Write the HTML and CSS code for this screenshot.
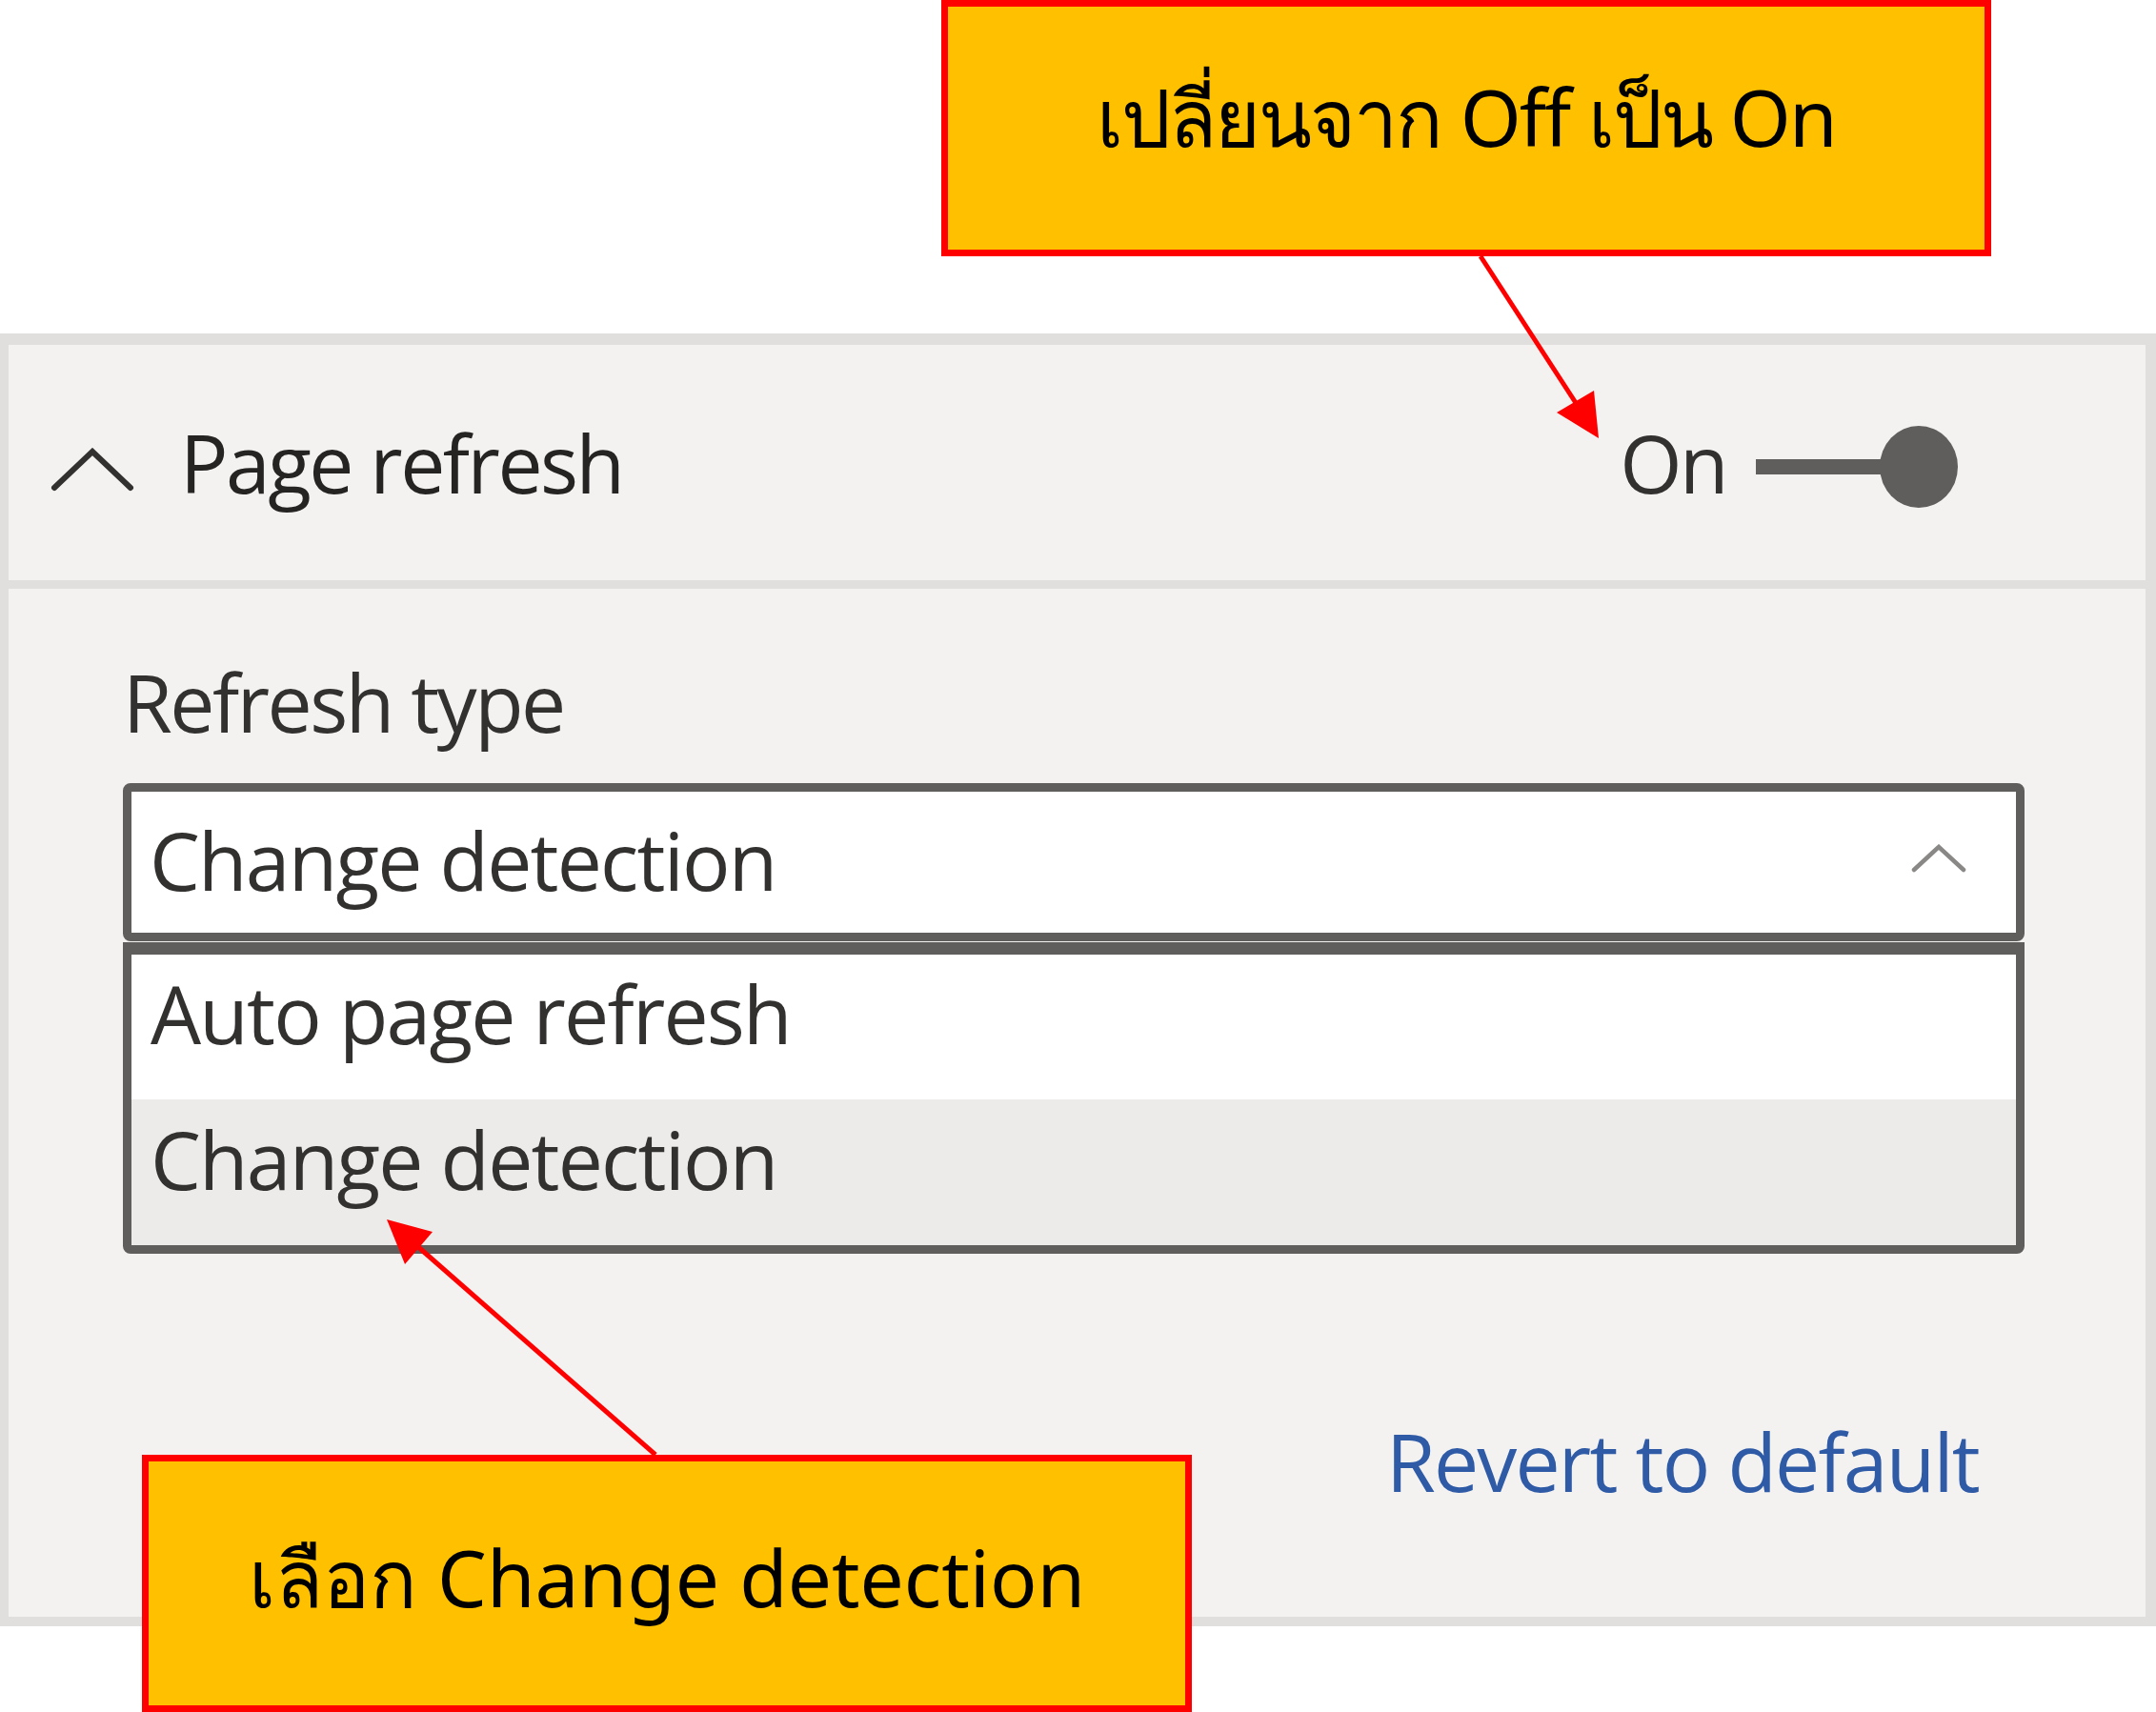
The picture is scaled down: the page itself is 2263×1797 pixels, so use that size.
FILE: index.html
```html
<!DOCTYPE html>
<html lang="th">
<head>
<meta charset="utf-8">
<title>Page refresh</title>
<link rel="stylesheet" href="styles.css">
</head>
<body>
<div class="page">
  <section class="panel">
    <header class="panel-head">
      <svg class="head-chev" width="88" height="46" viewBox="0 0 88 46"><polyline points="4,42 44,4 84,42"/></svg>
      <span class="title">Page refresh</span>
      <span class="state">On</span>
      <svg class="toggle" width="212" height="86" viewBox="0 0 212 86"><rect x="0" y="35" width="150" height="16"/><ellipse cx="171" cy="43" rx="41" ry="43"/></svg>
    </header>
    <div class="panel-body">
      <div class="label">Refresh type</div>
      <div class="select">
        <span class="select-value">Change detection</span>
        <svg class="select-chev" width="58" height="30" viewBox="0 0 58 30"><polyline points="3,27 29,3 55,27"/></svg>
      </div>
      <ul class="options">
        <li class="option">Auto page refresh</li>
        <li class="option option-selected">Change detection</li>
      </ul>
      <div class="revert-row"><span class="revert">Revert to default</span></div>
    </div>
  </section>

  <div class="callout callout-top">เปลี่ยนจาก Off เป็น On</div>
  <div class="callout callout-bottom">เลือก Change detection</div>

  <svg class="arrows" width="2263" height="1797" viewBox="0 0 2263 1797">
    <line x1="1554" y1="269" x2="1656" y2="426"/>
    <polygon points="1678,460 1673,410 1634,433"/>
    <line x1="688" y1="1527" x2="438" y2="1308"/>
    <polygon points="406,1280 454,1293 425,1327"/>
  </svg>
</div>
</body>
</html>
```

FILE: styles.css
```css
html, body {
  margin: 0;
  padding: 0;
  background: #ffffff;
}

.page {
  position: relative;
  width: 2263px;
  height: 1797px;
  overflow: hidden;
  font-family: "Open Sans", "Noto Sans", "Liberation Sans", sans-serif;
  color: #323130;
}

.panel {
  box-sizing: border-box;
  width: 2263px;
  margin-top: 350px;
  background: #f3f2f1;
  border-style: solid;
  border-color: #e1dfdd;
  border-width: 12px 11px 10px 9px;
}

.panel-head {
  box-sizing: border-box;
  height: 256px;
  display: flex;
  align-items: center;
  padding: 0 197px 0 44px;
  border-bottom: 9px solid #e1dfdd;
}

.head-chev {
  flex: none;
  margin-top: 14px;
}
.head-chev polyline {
  fill: none;
  stroke: #323130;
  stroke-width: 6;
  stroke-linecap: round;
  stroke-linejoin: miter;
}

.title {
  margin-left: 48px;
  font-size: 84px;
  line-height: 100px;
  letter-spacing: -2.5px;
  color: #252423;
  flex: 1;
}

.state {
  font-size: 84px;
  line-height: 100px;
  letter-spacing: -2.5px;
  color: #323130;
  margin-right: 31px;
}

.toggle {
  flex: none;
  margin-top: 8px;
}
.toggle rect,
.toggle ellipse {
  fill: #605e5c;
}

.panel-body {
  padding: 69px 127px 113px 120px;
}

.label {
  font-size: 84px;
  line-height: 100px;
  letter-spacing: -2.5px;
  color: #323130;
  margin-left: 0;
}

.select {
  box-sizing: border-box;
  margin-top: 35px;
  height: 166px;
  display: flex;
  align-items: center;
  background: #ffffff;
  border: 9px solid #605e5c;
  border-radius: 8px;
  padding: 0 52px 0 19px;
}

.select-value {
  flex: 1;
  font-size: 84px;
  line-height: 100px;
  letter-spacing: -1.8px;
  color: #323130;
  margin-top: -4px;
}

.select-chev {
  flex: none;
  margin-top: -8px;
}
.select-chev polyline {
  fill: none;
  stroke: #8a8886;
  stroke-width: 4.5;
  stroke-linecap: round;
}

.options {
  list-style: none;
  margin: 1px 0 0 0;
  padding: 0;
  background: #ffffff;
  border: 9px solid #605e5c;
  border-top-width: 13px;
  border-radius: 0 0 8px 8px;
  overflow: hidden;
}

.option {
  box-sizing: border-box;
  height: 152px;
  padding: 12px 0 0 20px;
  font-size: 84px;
  line-height: 100px;
  letter-spacing: -1.8px;
  color: #323130;
}

.option-selected {
  background: #edebe9;
  height: 153px;
  padding-top: 13px;
}

.revert-row {
  display: flex;
  justify-content: flex-end;
  margin-top: 168px;
  padding-right: 48px;
}

.revert {
  font-size: 84px;
  line-height: 100px;
  letter-spacing: -1.8px;
  color: #2e5aa6;
}

.callout {
  position: absolute;
  box-sizing: border-box;
  display: flex;
  align-items: center;
  justify-content: center;
  background: #ffc000;
  border: 7px solid #ff0000;
  color: #000000;
  font-family: "Noto Sans", "Open Sans", sans-serif;
  font-size: 82px;
  line-height: 1.2;
}

.callout-top {
  left: 988px;
  top: 0;
  width: 1102px;
  height: 269px;
  padding-bottom: 24px;
  letter-spacing: -2px;
}

.callout-bottom {
  left: 149px;
  top: 1527px;
  width: 1102px;
  height: 270px;
  padding-bottom: 14px;
  letter-spacing: 0;
}

.arrows {
  position: absolute;
  left: 0;
  top: 0;
  pointer-events: none;
}
.arrows line {
  stroke: #ff0000;
  stroke-width: 5;
}
.arrows polygon {
  fill: #ff0000;
}
```
